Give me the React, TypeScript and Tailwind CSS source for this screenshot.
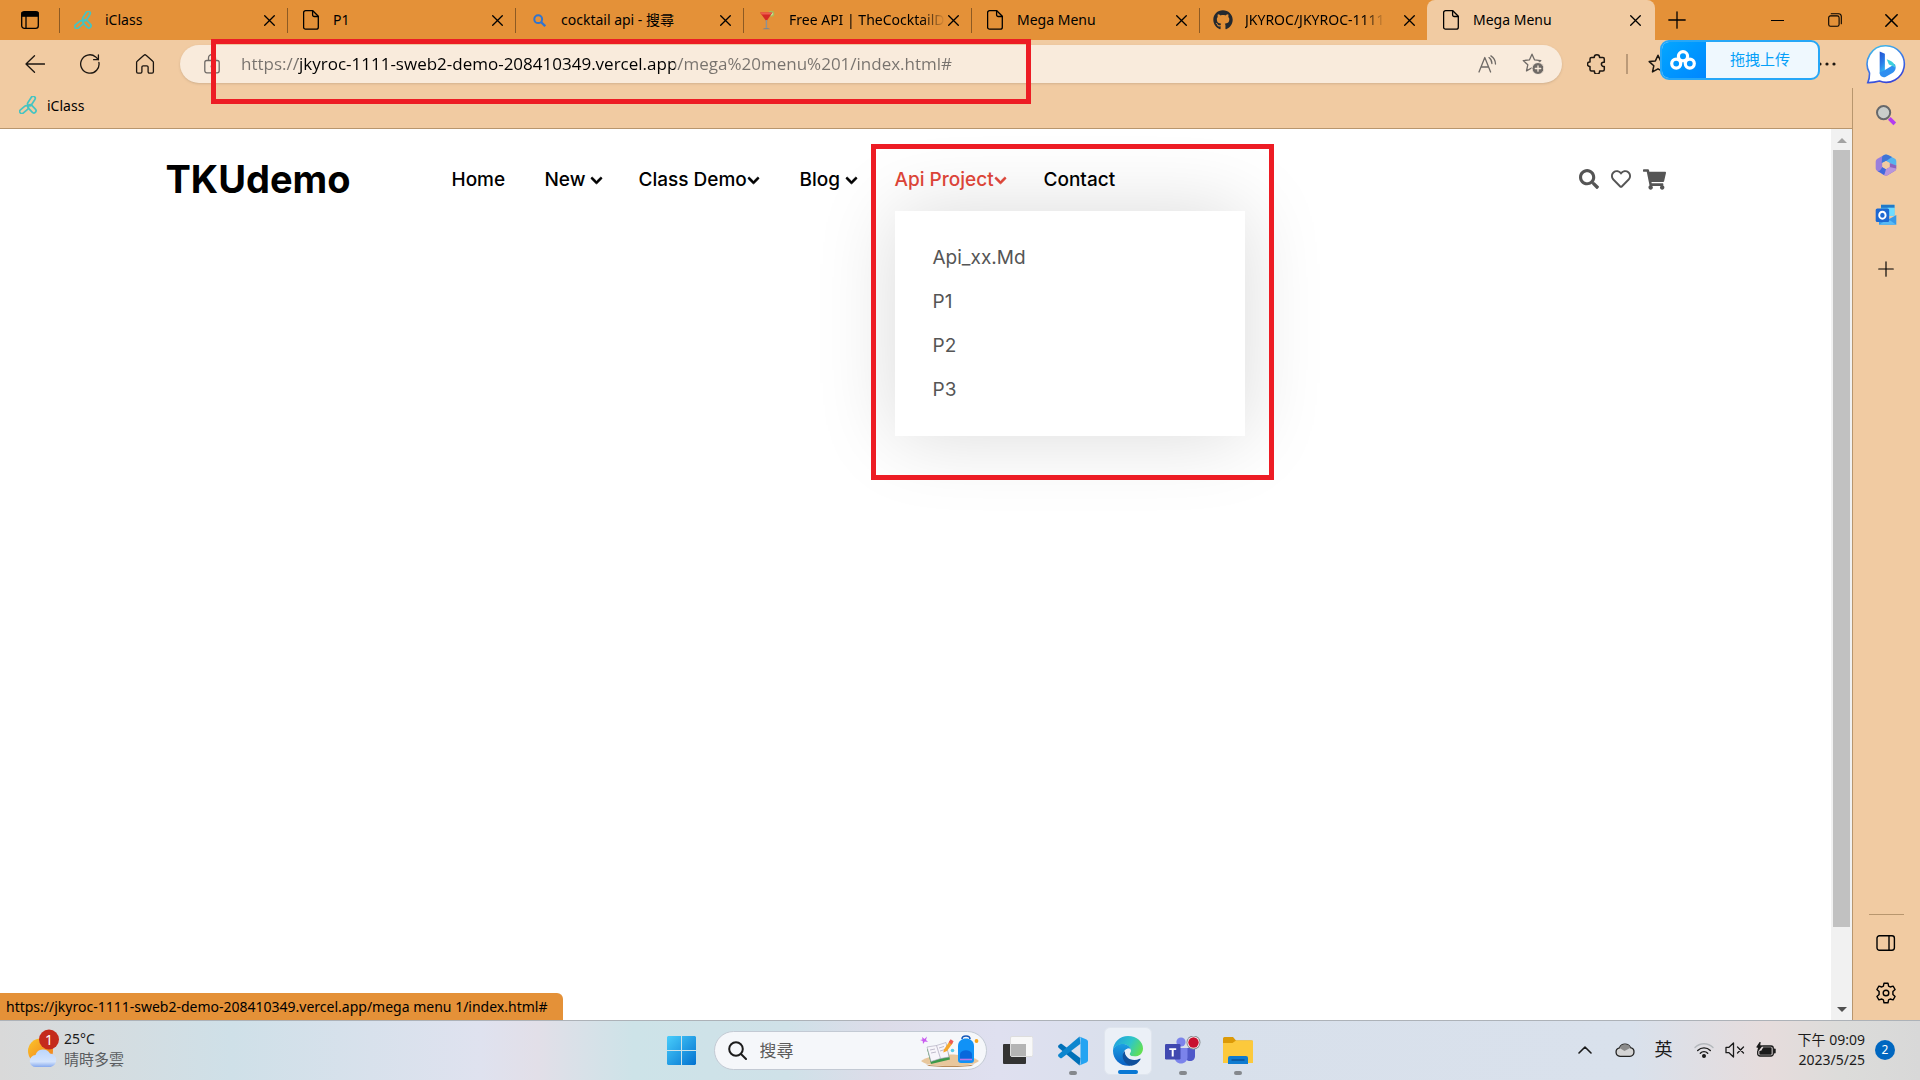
import React from "react";
import {
  FaSearch,
  FaRegHeart,
  FaShoppingCart,
  FaChevronDown,
  FaGithub,
} from "react-icons/fa";

type IconProps = { className?: string };

const stroke = {
  fill: "none",
  stroke: "currentColor",
  strokeLinecap: "round" as const,
  strokeLinejoin: "round" as const,
};

const CloseIcon = ({ className = "size-[11px]" }: IconProps) => (
  <svg viewBox="0 0 11 11" className={className} {...stroke} strokeWidth="1.3">
    <path d="M.7.7l9.6 9.6M10.3.7L.7 10.3" />
  </svg>
);

const PlusIcon = ({ className = "size-[18px]" }: IconProps) => (
  <svg viewBox="0 0 18 18" className={className} {...stroke} strokeWidth="1.3">
    <path d="M9 .8v16.4M.8 9h16.4" />
  </svg>
);

const PageIcon = () => (
  <svg viewBox="0 0 16 20" className="h-5 w-4" {...stroke} strokeWidth="1.3">
    <path d="M2.6.7h7.2l5.5 5.6v10.9a2 2 0 01-2 2H2.6a2 2 0 01-2-2V2.700a2 2 0 012-2z" />
    <path d="M9.600.9v4a1.600 1.600 0 001.600 1.600h4" />
  </svg>
);

const IClassIcon = () => (
  <svg viewBox="0 0 18 18" className="size-[18px]" fill="none" stroke="#45c4c2" strokeWidth="1.7">
    <rect x="10.300" y="-.3" width="4.200" height="10.500" rx="2.100" transform="rotate(33 12.400 5)" />
    <rect x="2.900" y="8.600" width="4.200" height="10" rx="2.100" transform="rotate(50 5 13.600)" />
    <rect x="10.800" y="8" width="4.400" height="9.600" rx="2.200" transform="rotate(-43 13 12.800)" />
  </svg>
);

const BlueSearchIcon = () => (
  <svg viewBox="0 0 13 13" className="size-[13px]" fill="none" stroke="#2f74d0">
    <circle cx="5.200" cy="5.200" r="3.900" strokeWidth="2" />
    <path d="M8.200 8.200l4 4" strokeWidth="2.300" />
  </svg>
);

const CocktailIcon = () => (
  <svg viewBox="0 0 16 20" className="h-5 w-4">
    <circle cx="12.300" cy="3.800" r="3" fill="#a9bd5a" />
    <circle cx="12.300" cy="3.800" r="1.600" fill="#d9dc9a" />
    <path d="M1 2.400h12.400L8 10.600h-1.200z" fill="#d42a25" />
    <path d="M1 2.400l12.400.2-2 1.800H2.800z" fill="#ee5c4c" />
    <path d="M6.700 10h1.400v8H6.700z" fill="#8d9296" />
    <path d="M3.600 19.200c1-1.700 6.600-1.700 7.600 0z" fill="#7f878c" />
  </svg>
);

type Tab = { title: string; icon: React.ReactNode; active?: boolean; fade?: boolean };

const tabs: Tab[] = [
  { title: "iClass", icon: <IClassIcon /> },
  { title: "P1", icon: <PageIcon /> },
  { title: "cocktail api - 搜尋", icon: <BlueSearchIcon /> },
  { title: "Free API | TheCocktailD", icon: <CocktailIcon />, fade: true },
  { title: "Mega Menu", icon: <PageIcon /> },
  {
    title: "JKYROC/JKYROC-1111",
    icon: <FaGithub className="size-5 text-[#24292f]" />,
    fade: true,
  },
  { title: "Mega Menu", icon: <PageIcon />, active: true },
];

function TabStrip() {
  return (
    <header className="flex h-10 items-stretch bg-[#e49138] text-black">
      <button aria-label="Tab actions" className="flex w-[59px] items-center justify-center">
        <svg viewBox="0 0 18 18" className="size-[18px]" {...stroke} strokeWidth="1.300">
          <rect x=".7" y=".7" width="16.600" height="16.600" rx="2.600" />
          <path d="M1 1.500h16v3.700H1z" fill="currentColor" />
          <path d="M5 5v12" />
        </svg>
      </button>
      {tabs.map((tab, i) => (
        <div
          key={i}
          className={
            tab.active
              ? "relative flex w-[228px] items-center rounded-t-lg bg-[#f1cba2] pr-[14px] pl-[14px]"
              : "relative flex w-[228px] items-center pr-3 pl-[14px]"
          }
        >
          {!tab.active && <span className="absolute top-2 left-0 h-[25px] w-px bg-[#8d5a23]" />}
          <button className="flex min-w-0 grow items-center gap-3">
            <span className="flex w-5 shrink-0 justify-center">{tab.icon}</span>
            <span
              className={
                tab.fade
                  ? "mask-r-from-[85%] mask-r-to-[100%] pb-0.5 text-left text-[14px] whitespace-nowrap"
                  : "pb-0.5 text-left text-[14px] whitespace-nowrap"
              }
            >
              {tab.title}
            </span>
          </button>
          <button aria-label="Close tab" className="shrink-0">
            <CloseIcon />
          </button>
        </div>
      ))}
      <button aria-label="New tab" className="flex w-11 items-center justify-center">
        <PlusIcon />
      </button>
      <div className="ml-auto flex">
        <button aria-label="Minimize" className="flex w-[57px] items-center justify-center">
          <span className="h-px w-[13px] bg-black" />
        </button>
        <button aria-label="Restore" className="flex w-[57px] items-center justify-center">
          <svg viewBox="0 0 14 14" className="size-[14px]" {...stroke} strokeWidth="1.100">
            <rect x=".7" y="2.900" width="10.400" height="10.400" rx="1.800" />
            <path d="M3.200.7h7.300a2.800 2.800 0 012.800 2.800v7.300" />
          </svg>
        </button>
        <button aria-label="Close window" className="flex w-[57px] items-center justify-center">
          <CloseIcon className="size-[13px]" />
        </button>
      </div>
    </header>
  );
}

const starPath =
  "M10 1.200l2.600 5.700 6.200.7-4.600 4.200 1.300 6.100L10 14.800l-5.500 3.100 1.300-6.100L1.200 7.600l6.200-.7z";

function Toolbar() {
  return (
    <div className="flex h-12 items-center text-[#1c1610]">
      <div className="flex w-[180px] shrink-0 items-center gap-[35px] pl-[25px]">
        <button aria-label="Back">
          <svg viewBox="0 0 20 20" className="size-5" {...stroke} strokeWidth="1.300">
            <path d="M9.500 1.700L1 10l8.500 8.300M1 10h18.500" />
          </svg>
        </button>
        <button aria-label="Refresh">
          <svg viewBox="0 0 20 20" className="size-5" {...stroke} strokeWidth="1.300">
            <path d="M18.900 8.300a9.200 9.200 0 11-3.200-5.400l2.600 2.600" />
            <path d="M18.400.9v4.800h-4.800" />
          </svg>
        </button>
        <button aria-label="Home">
          <svg viewBox="0 0 20 20" className="size-5" {...stroke} strokeWidth="1.300">
            <path d="M8.900 1.300a1.600 1.600 0 012.200 0l6.700 5.900c.4.300.6.800.6 1.300v9.300a1.300 1.300 0 01-1.300 1.300h-2.700a1.300 1.300 0 01-1.300-1.300v-4.700a1.300 1.300 0 00-1.300-1.300H8.200a1.300 1.300 0 00-1.300 1.300v4.700a1.300 1.300 0 01-1.300 1.300H2.900a1.300 1.300 0 01-1.300-1.300V8.500c0-.5.200-1 .6-1.300z" />
          </svg>
        </button>
      </div>
      <div className="flex h-[38px] grow items-center rounded-full bg-[#f9ebdc] pr-[18px] pl-6 text-[#6f6a66] shadow-sm">
        <svg viewBox="0 0 16 20" className="h-5 w-4 shrink-0" {...stroke} strokeWidth="1.300">
          <rect x=".8" y="6.500" width="14.400" height="12.300" rx="2" />
          <path d="M4.500 6.300V4a3.500 3.500 0 017 0v2.300" />
          <circle cx="8" cy="12.500" r=".8" fill="currentColor" />
        </svg>
        <input
          aria-label="Address"
          defaultValue="https://jkyroc-1111-sweb2-demo-208410349.vercel.app/mega%20menu%201/index.html#"
          className="ml-[21px] min-w-0 grow bg-[linear-gradient(to_right,#77726d_57px,#000_57px,#000_434px,#77726d_434px)] bg-clip-text font-['Open_Sans',sans-serif] text-[17px] text-transparent outline-none"
        />
        <button aria-label="Read aloud">
          <svg viewBox="0 0 20 18" className="h-[18px] w-5" {...stroke} strokeWidth="1.300">
            <path d="M1 17L6.800 2.500 12.600 17M3 12h7.600M11 2.600c2 1.500 2.900 3.500 2.900 6M12.900.9c3 2 4.600 5 4.600 8.200" />
          </svg>
        </button>
        <button aria-label="Add to favorites" className="ml-6">
          <svg viewBox="0 0 22 22" className="size-[22px]" {...stroke} strokeWidth="1.300">
            <path d={starPath} />
            <circle cx="16" cy="15.500" r="6" fill="#6f6a66" stroke="#f9ebdc" strokeWidth="1" />
            <path d="M16 12.800v5.400M13.300 15.500h5.400" stroke="#f9ebdc" />
          </svg>
        </button>
      </div>
      <div className="relative flex w-[290px] shrink-0 items-center pl-[25px]">
        <button aria-label="Extensions">
          <svg viewBox="0 0 20 20" className="size-5" {...stroke} strokeWidth="1.500">
            <path d="M7.200 3.500a2.700 2.700 0 015.400 0h3.200a1.500 1.500 0 011.500 1.500v3.200h-.8a2.100 2.100 0 000 4.200h.8v3.200a1.500 1.500 0 01-1.500 1.500h-3.200v.3a2.500 2.500 0 01-5.200 0v-.3H4.500A1.500 1.500 0 013 15.600v-3.200h-.3a2.200 2.200 0 010-4.400H3V5a1.500 1.500 0 011.500-1.500z" />
          </svg>
        </button>
        <span className="ml-[19px] h-5 w-0.5 bg-[#bb9a78]" />
        <button aria-label="Favorites" className="ml-5">
          <svg viewBox="0 0 20 20" className="size-5" {...stroke} strokeWidth="1.500">
            <path d={starPath} />
          </svg>
        </button>
        <button aria-label="Settings and more" className="mr-4 ml-auto">
          <svg viewBox="0 0 18 4" className="h-1 w-[18px]" fill="currentColor">
            <circle cx="2" cy="2" r="1.600" />
            <circle cx="9" cy="2" r="1.600" />
            <circle cx="16" cy="2" r="1.600" />
          </svg>
        </button>
        <button className="absolute -top-[14px] left-[98px] flex h-10 w-40 overflow-hidden rounded-[9px] border-2 border-[#27a7f7] bg-[#eff8fe]">
          <span className="-m-0.5 flex h-10 w-[46px] shrink-0 items-center justify-center bg-linear-to-br from-[#06a8ff] to-[#0285ff]">
            <svg viewBox="0 0 26 20" className="h-5 w-[26px]" fill="none" stroke="#fff" strokeWidth="3.200">
              <circle cx="13" cy="6.300" r="4.600" />
              <circle cx="6.200" cy="13.600" r="4.500" />
              <circle cx="19.800" cy="13.600" r="4.500" />
            </svg>
          </span>
          <span className="grow self-center pr-0.5 pb-0.5 text-[15px] text-[#06a0f8]">拖拽上传</span>
        </button>
      </div>
    </div>
  );
}

type MenuItem = { label: string; arrow?: boolean; space?: boolean; open?: boolean; width: string };

const menu: MenuItem[] = [
  { label: "Home", width: "w-[93px]" },
  { label: "New", arrow: true, space: true, width: "w-[94px]" },
  { label: "Class Demo", arrow: true, width: "w-[161px]" },
  { label: "Blog", arrow: true, space: true, width: "w-[95px]" },
  { label: "Api Project", arrow: true, open: true, width: "w-[149px]" },
  { label: "Contact", width: "w-[93px]" },
];

function DemoPage() {
  return (
    <main className="min-w-0 grow bg-white px-5 pt-5 font-[Inter,sans-serif]">
      <div className="mx-auto flex max-w-[1500px] items-center">
        <a href="#" className="w-[286px] pb-0.5 text-[38px] leading-none font-bold text-black">
          TKUdemo
        </a>
        <nav>
          <ul className="flex">
            {menu.map((item) => (
              <li
                key={item.label}
                className={`relative flex h-[62px] items-center ${item.width}`}
              >
                <a
                  href="#"
                  className={
                    item.open
                      ? "relative z-10 flex items-center text-[19px] font-medium whitespace-nowrap text-[#db4437]"
                      : "relative z-10 flex items-center text-[19px] font-medium whitespace-nowrap text-black"
                  }
                >
                  {item.label}
                  {item.arrow && (
                    <FaChevronDown
                      className={
                        item.space
                          ? "ml-[5px] size-[13px] stroke-current stroke-[30px]"
                          : "size-[13px] stroke-current stroke-[30px]"
                      }
                    />
                  )}
                </a>
                {item.open && (
                  <ul className="absolute top-full left-0 w-[350px] bg-white px-[38px] pt-[25px] pb-6 text-[19px] text-[#555] shadow-[0_0_80px_rgba(0,0,0,0.15)]">
                    {["Api_xx.Md", "P1", "P2", "P3"].map((t) => (
                      <li key={t} className="flex h-11 items-center">
                        <a href="#">{t}</a>
                      </li>
                    ))}
                  </ul>
                )}
              </li>
            ))}
          </ul>
        </nav>
        <div className="ml-auto flex items-center gap-3 pb-0.5 text-[20px] text-[#555]">
          <button aria-label="Search">
            <FaSearch />
          </button>
          <button aria-label="Wishlist">
            <FaRegHeart />
          </button>
          <button aria-label="Cart">
            <FaShoppingCart className="size-[23px]" />
          </button>
        </div>
      </div>
    </main>
  );
}

function ScrollBar() {
  return (
    <div className="flex w-[21px] shrink-0 flex-col items-center bg-[#f1f1f1]">
      <svg viewBox="0 0 10 5" className="mt-[9px] mb-[7px] h-[5px] w-[10px]" fill="#a3a3a3">
        <path d="M5 0l5 5H0z" />
      </svg>
      <div className="h-[777px] w-[17px] bg-[#c1c1c1]" />
      <svg viewBox="0 0 10 5" className="mt-auto mb-2 h-[5px] w-[10px]" fill="#505050">
        <path d="M5 5l5-5H0z" />
      </svg>
    </div>
  );
}

function SideBar() {
  return (
    <aside className="flex w-[68px] shrink-0 flex-col">
      <div className="flex h-12 items-start justify-center pt-1">
        <button aria-label="Bing chat">
          <svg viewBox="0 0 40 40" className="size-10">
            <defs>
              <linearGradient id="bingRing" x1="0" y1="0" x2=".4" y2="1">
                <stop offset="0" stopColor="#3fc5ea" />
                <stop offset=".55" stopColor="#3d7be8" />
                <stop offset="1" stopColor="#3848d8" />
              </linearGradient>
              <linearGradient id="bingB" x1="0" y1="0" x2=".3" y2="1">
                <stop offset="0" stopColor="#2450d0" />
                <stop offset=".6" stopColor="#2b7de9" />
                <stop offset="1" stopColor="#35b4f2" />
              </linearGradient>
            </defs>
            <path d="M20 1.700a18.300 18.300 0 11-6.500 35.400c-3.500 1-7.500 1.600-11.700 1.500 1.500-3 1.800-6 1.700-9.700A18.300 18.300 0 0120 1.700z" fill="#fff" stroke="url(#bingRing)" strokeWidth="1.600" />
            <path d="M13.700 7.500l5.200 2.200v16.800l-5.200 3.400z" fill="url(#bingB)" />
            <path d="M13.700 28.500l5.200-2.500 10-6c1.500 4 .8 7-2.500 9l-7 3.900c-3.300 1-5.700-1-5.700-4.400z" fill="#2f8ff0" />
            <path d="M20.700 15.200c5.500 1.700 8.300 4 8.500 8.500-1-1.200-2.300-1.900-6.300-3.200z" fill="#3fd0dc" />
          </svg>
        </button>
      </div>
      <nav className="flex grow flex-col items-center border-l border-[#b8966e] pr-px pb-4">
        <button aria-label="Search" className="mt-4">
          <svg viewBox="0 0 22 22" className="size-[22px]" fill="none">
            <path d="M14.300 14.300l5.500 5.500" stroke="#b43cf0" strokeWidth="3.800" />
            <circle cx="8.600" cy="8.600" r="6.600" fill="#c9cdca" stroke="#66686b" strokeWidth="2" />
          </svg>
        </button>
        <button aria-label="Microsoft 365" className="mt-7">
          <svg viewBox="0 0 22 22" className="size-[22px]">
            <path d="M9 .9L2 5Q.7 6 .7 7.500v7Q.7 16 2 16.800l1.500.8L7.400 15V7z" fill="#9a7fdc" />
            <path d="M9 .9Q11 0 13 .9l7 3.800q1.300.8 1.300 2.600v5L14.600 9 11 7 7.400 9 6.800 6z" fill="#56b4ee" />
            <path d="M9 .9L7.200 2.600 6.700 9l4.800-2.300L17 3.100 13 .9Q11 0 9 .9z" fill="#3f74d6" />
            <path d="M21.300 11.500v2.900q0 1.600-1.300 2.400l-7 4.300q-2 1-4 0l-1.600-1 .2-3L14.600 13V9z" fill="#8a62c0" />
            <path d="M9 21.100l-7-4.300q1.300.7 2.900-.1L7.400 13l3.600 2.300 3.600-2.300 6.600 1.500q0 1.500-1.200 2.300l-7 4.300q-2 1-4 0z" fill="#b795dc" />
            <path d="M9 21.100l-7-4.300q1.400.6 2.900-.2L7.400 13l3.600 2.200-1.500 5z" fill="#4169dc" />
            <path d="M11 7l3.500 2v4L11 15.100 7.500 13V9z" fill="#f1cba2" />
          </svg>
        </button>
        <button aria-label="Outlook" className="mt-7">
          <svg viewBox="0 0 22 22" className="size-[22px]">
            <path d="M6 .8h13.500v11H6z" fill="#58c6f5" />
            <path d="M6 .8h13.500v3H6z" fill="#2179c8" />
            <path d="M12.500 3.800h7v8h-7z" fill="#6fdcff" />
            <path d="M4 20.800h17.300V11l-8 4.500L4 13z" fill="#3799ea" />
            <path d="M4 20.800h17.300L13 15z" fill="#58baf5" />
            <rect x=".7" y="4.500" width="13.500" height="13.500" rx="1.600" fill="#1c68d2" />
            <ellipse cx="7.400" cy="11.200" rx="3.200" ry="3.500" fill="none" stroke="#fff" strokeWidth="1.900" />
          </svg>
        </button>
        <button aria-label="Customize" className="mt-[35px]">
          <PlusIcon className="size-4" />
        </button>
        <span className="mt-auto h-px w-[35px] bg-[#b8966e]" />
        <button aria-label="Hide sidebar" className="mt-5">
          <svg viewBox="0 0 20 16" className="h-4 w-5" {...stroke} strokeWidth="1.400">
            <rect x="1" y=".8" width="17.400" height="14.400" rx="2.400" />
            <path d="M13 1v14" />
          </svg>
        </button>
        <button aria-label="Settings" className="mt-[31px]">
          <svg viewBox="0 0 22 22" className="size-[22px]" {...stroke} strokeWidth="1.400">
            <path d="M9 1.200h4l.6 2.900 1.600.9 2.900-.9 2 3.400-2.200 2.100v2.800l2.200 2.100-2 3.400-2.900-.9-1.600.9-.6 2.900H9l-.6-2.900-1.600-.9-2.900.9-2-3.400 2.200-2.100V9.600L1.900 7.500l2-3.400 2.900.9 1.600-.9z" />
            <circle cx="11" cy="11" r="2.800" />
          </svg>
        </button>
      </nav>
    </aside>
  );
}

const TaskViewIcon = () => (
  <svg viewBox="0 0 30 30" className="size-[30px]">
    <rect x="0" y="8" width="23" height="20" rx="1" fill="#333" />
    <rect x="7.500" y=".5" width="22.500" height="20" rx="1.500" fill="#f8f8f8" stroke="#ddd" />
    <path d="M8 8h15v12H8z" fill="#b4b4b4" />
  </svg>
);

const CodeIcon = () => (
  <svg viewBox="0 0 100 100" className="size-[30px]">
    <path d="M2 31c-2.500 2.300-2.500 5.500 0 7.800L72 98.500 75 74 13 27c-2-1.500-4-1.500-6 0z" fill="#0070b8" />
    <path d="M2 69c-2.500-2.300-2.500-5.500 0-7.800L72 1.500 75 26 13 73c-2 1.500-4 1.500-6 0z" fill="#0d86cf" />
    <path d="M71 1.500L95 12c3 1.500 5 4 5 7v62c0 3-2 5.500-5 7L71 98.500c2.700-1 4-3 4-6V7.500c0-3-1.300-5-4-6z" fill="#24a4f2" />
  </svg>
);

const EdgeIcon = () => (
  <svg viewBox="0 0 30 30" className="size-[30px]">
    <defs>
      <linearGradient id="edgeTop" x1="0" y1=".2" x2="1" y2=".6">
        <stop offset="0" stopColor="#1f9fe0" />
        <stop offset=".55" stopColor="#2fc6c8" />
        <stop offset="1" stopColor="#62e052" />
      </linearGradient>
      <linearGradient id="edgeLeft" x1="0" y1="0" x2="0" y2="1">
        <stop offset="0" stopColor="#1c9fe2" />
        <stop offset="1" stopColor="#0a5fc4" />
      </linearGradient>
    </defs>
    <path d="M0 14C.5 6 7 0 15 0c9 0 15 6 15 12.500 0 5-4 8-8.500 8-3.500 0-5-1.200-5-2.200 0-1 1.300-1.500 1.300-4 0-3-3.300-6-8-6C5.500 8.300 1.500 10.500 0 14z" fill="url(#edgeTop)" />
    <path d="M0 14c1.200-3.700 5-5.900 9.500-5.900 4.500 0 8.300 2.700 8.300 6.200-.8-1.200-2-1.800-3.500-1.500-3.500 1-4.800 4.700-3.300 9 1 3.200 3.500 6 6.500 7.900C8 31 0 24 0 15z" fill="url(#edgeLeft)" />
    <path d="M11.500 15c-3 3.700-2 8.500 1 11.700 1.800 2 4 3.200 6 3 3.700-.5 7-3 9-6.300.3-.7-.2-1-.8-.7-5.200 2.500-12 1-14-3.700-.5-1.500-.6-2.700-1.200-4z" fill="#10509c" />
    <path d="M17.800 14.300c0-2.500-3.300-2.300-4.800-.5-1 1.300-1.300 3.500 0 5.500 1.500 2 3.700 3.500 6 3.900 3 .3 5.500 0 8-1l-5.500-1.700c-3.500 0-5-1.200-5-2.200 0-1 1.300-1.500 1.300-4z" fill="#e9eff7" />
  </svg>
);

const TeamsIcon = () => (
  <svg viewBox="0 0 36 30" className="h-[30px] w-9">
    <path d="M22 12h8v8c0 3-2 5-5 5s-5-2-5-5z" fill="#5059c9" />
    <circle cx="16" cy="6" r="4.600" fill="#7b83eb" />
    <path d="M9.500 12h13v9c0 4-3 6.500-6.500 6.500S9.500 25 9.500 21z" fill="#7b83eb" />
    <rect x="0" y="8" width="15.500" height="15.500" rx="1.200" fill="#4048b0" />
    <path d="M4.200 12.200h7v1.800H8.700v6.400h-2V14H4.200z" fill="#fff" />
    <circle cx="28.500" cy="6.500" r="7" fill="#8a8d92" />
    <circle cx="28.500" cy="6.500" r="6" fill="#fff" />
    <circle cx="28.500" cy="6.500" r="5.200" fill="#c8102e" />
  </svg>
);

const FolderIcon = () => (
  <svg viewBox="0 0 30 27" className="h-[27px] w-[30px]">
    <path d="M0 1.500A1.500 1.500 0 011.500 0H10l3 3.500h15.500A1.500 1.500 0 0130 5v8H0z" fill="#dc9a08" />
    <path d="M0 6h9.500L13 3.500h17V26H0z" fill="#fcc93c" />
    <path d="M5 27v-6a2 2 0 012-2h16a2 2 0 012 2v6z" fill="#0f7bd0" />
    <path d="M8.500 23h13" stroke="#0a4f94" strokeWidth="1.400" />
  </svg>
);

const StudyArt = () => (
  <svg viewBox="0 0 60 32" className="h-8 w-[60px] shrink-0">
    <path d="M1 26c6-4 15-6.500 28-6.500S54 22 59 26c-4 4-16 5-29 5S5 30 1 26z" fill="#e8c79c" />
    <path d="M6 29.500c12 2 35 2 48 0l-3 1.500c-12 1.500-30 1.500-42 0z" fill="#b88a58" />
    <path d="M7 14l19-5 4 15.500L11 29z" fill="#3c9a4a" />
    <path d="M7 12l9.500-1.500L26 7.500 29 22l-8.500 1.500-9.500 3z" fill="#f7f5fa" stroke="#a8a4b8" strokeWidth=".6" />
    <path d="M16.500 10.500l4 13M10 15l5-1M11 18l5-1M19 13l5-1.500M20 16l5-1.500" stroke="#a8a4b8" strokeWidth=".7" />
    <path d="M24 14.500l6-9 3 2.200-6 8.300-3.700 1.500z" fill="#f6a72c" />
    <path d="M28.700 7.200l1.900-3 3 2-2 3.200z" fill="#ee5a55" />
    <path d="M42 4c0-4 8-4 8 0" fill="none" stroke="#1557b8" strokeWidth="1.600" />
    <path d="M38 11c0-10 16-10 16 0v14a3 3 0 01-3 3H41a3 3 0 01-3-3z" fill="#1192f6" />
    <path d="M40 19c1-5 11-5 12 0v6H40z" fill="#0868dc" />
    <path d="M40 24.500h12" stroke="#b978ec" strokeWidth="1.600" />
    <path d="M2 2l2.500 2L7 1.500 6 5l2 2-3.200-.4L3 9l-.3-3L0 5l2.500-.6z" fill="#c95cf0" />
    <circle cx="56.500" cy="6" r="1.900" fill="#f5a318" />
    <circle cx="32.500" cy="15.500" r="1.800" fill="#55cbe8" />
  </svg>
);

const apps = [
  { name: "Task view", icon: <TaskViewIcon />, dot: "" },
  { name: "Visual Studio Code", icon: <CodeIcon />, dot: "w-2 bg-[#85888d]" },
  { name: "Edge", icon: <EdgeIcon />, dot: "w-5 bg-[#0a78d4]", active: true },
  { name: "Teams", icon: <TeamsIcon />, dot: "w-2 bg-[#85888d]" },
  { name: "File Explorer", icon: <FolderIcon />, dot: "w-2 bg-[#85888d]" },
];

function TaskBar() {
  return (
    <footer className="grid h-[60px] shrink-0 grid-cols-[1fr_auto_1fr] items-center border-t border-[#adb2b8] bg-[linear-gradient(to_right,#d9d9d9_0%,#cfe0e8_12%,#dfe2ef_25%,#e2dfe8_28%,#cde3e8_33%,#cfe1e8_41%,#dddce9_46%,#dfe0f0_52%,#d8e0eb_60%,#d9e1ec_85%,#e6dcdc_92%,#dcdcda_96%,#d8d8d8_100%)] text-[14px] text-[#1b1b1b]">
      <button className="flex items-center gap-[5px] justify-self-start pb-1 pl-[27px] text-left">
        <svg viewBox="0 0 32 40" className="h-10 w-8">
          <defs>
            <linearGradient id="sun" x1="0" y1="0" x2="1" y2="1">
              <stop offset="0" stopColor="#fbc52c" />
              <stop offset="1" stopColor="#f07818" />
            </linearGradient>
            <linearGradient id="cloud" x1="0" y1="0" x2="0" y2="1">
              <stop offset="0" stopColor="#bcd6fb" />
              <stop offset=".7" stopColor="#d4e4fd" />
              <stop offset="1" stopColor="#86a9ee" />
            </linearGradient>
          </defs>
          <circle cx="13.500" cy="22" r="12.500" fill="url(#sun)" />
          <path d="M9 38a6 6 0 01-.5-12 8 8 0 0114.500-1.500A6.800 6.800 0 0123.500 38z" fill="url(#cloud)" />
          <circle cx="22" cy="10.500" r="10" fill="#c42b1c" />
          <text x="22" y="15.500" textAnchor="middle" fontSize="14" fill="#fff">
            1
          </text>
        </svg>
        <span className="flex flex-col leading-5">
          <span>25°C</span>
          <span className="text-[15px] text-[#5a5d60]">晴時多雲</span>
        </span>
      </button>

      <div className="flex items-center pl-2">
        <button aria-label="Start" className="mr-[18px]">
          <svg viewBox="0 0 29 29" className="size-[29px]">
            <defs>
              <linearGradient id="win" x1="0" y1="0" x2="1" y2="1">
                <stop offset="0" stopColor="#48cdfb" />
                <stop offset="1" stopColor="#0372d0" />
              </linearGradient>
            </defs>
            <path d="M1 0h13v14H0V1zM15 0h13l1 1v13H15zM0 15h14v14H1l-1-1zM15 15h14v13l-1 1H15z" fill="url(#win)" />
          </svg>
        </button>
        <label className="flex h-[39px] w-[273px] items-center rounded-full border border-[#c3cad4] bg-[#f5f7fa] pr-1.5 pl-[13px]">
          <svg viewBox="0 0 19 19" className="size-[19px] shrink-0" {...stroke} strokeWidth="2">
            <circle cx="8" cy="8" r="6.800" />
            <path d="M13 13l5 5" />
          </svg>
          <input
            aria-label="搜尋"
            placeholder="搜尋"
            className="ml-[13px] min-w-0 grow bg-transparent text-[17px] outline-none placeholder:text-[#5c5c5c]"
          />
          <StudyArt />
        </label>
        <div className="ml-[7px] flex gap-[7px]">
          {apps.map((app) => (
            <button
              key={app.name}
              aria-label={app.name}
              className={
                app.active
                  ? "relative flex size-12 items-center justify-center rounded-md border border-[#dfe5ee] bg-[#ebf0f7]"
                  : "relative flex size-12 items-center justify-center"
              }
            >
              {app.icon}
              {app.dot && (
                <span className={`absolute bottom-0 left-1/2 h-1 -translate-x-1/2 rounded-full ${app.dot}`} />
              )}
            </button>
          ))}
        </div>
      </div>

      <div className="flex items-center justify-self-end pr-[25px] pb-0.5">
        <button aria-label="Show hidden icons">
          <svg viewBox="0 0 14 8" className="h-2 w-[14px]" {...stroke} strokeWidth="1.600">
            <path d="M1 7l6-6 6 6" />
          </svg>
        </button>
        <button aria-label="OneDrive" className="ml-[23px]">
          <svg viewBox="0 0 20 14" className="h-[14px] w-5">
            <path d="M5 13.300a4.300 4.300 0 01-.5-8.500 6 6 0 0111-.2 4.400 4.400 0 01-.7 8.700z" fill="#d4d4d4" stroke="#222" strokeWidth="1.300" />
            <path d="M4.500 5a6 6 0 0111-.3L9.500 8z" fill="#8b8b8b" />
          </svg>
        </button>
        <button className="ml-5 text-[18px]">英</button>
        <button aria-label="Network and sound" className="ml-[21px] flex items-center gap-[11px]">
          <svg viewBox="0 0 20 16" className="h-4 w-5" {...stroke} strokeWidth="1.400">
            <path d="M1 5.500a12.700 12.700 0 0118 0" stroke="#b4b8bc" />
            <path d="M3.700 8.400a9 9 0 0112.600 0M6.300 11.200a5.200 5.200 0 017.400 0" />
            <circle cx="10" cy="14" r="1.300" fill="currentColor" />
          </svg>
          <svg viewBox="0 0 20 16" className="h-4 w-5" {...stroke} strokeWidth="1.300">
            <path d="M1 5.300h3L8.500 1v14L4 10.700H1zM12.500 5l6 6M18.500 5l-6 6" />
          </svg>
          <svg viewBox="0 0 20 16" className="h-4 w-5" {...stroke} strokeWidth="1.300">
            <path d="M6.500 4H15a2.300 2.300 0 012.300 2.300v5.400A2.300 2.300 0 0115 14H4a2.300 2.300 0 01-2.300-2.300V9.500" />
            <path d="M18.700 7.500v3" strokeWidth="2" />
            <path d="M7.500 6h7.500v6H4V9.500h1.500z" fill="currentColor" />
            <path d="M4 .5L1 5h2l-1 3.500L5.500 4h-2z" fill="currentColor" />
          </svg>
        </button>
        <button className="ml-[22px] flex items-center gap-[10px]">
          <span className="flex flex-col text-right leading-5">
            <span>下午 09:09</span>
            <span>2023/5/25</span>
          </span>
          <span className="flex size-5 items-center justify-center rounded-full bg-[#0067c0] text-[12px] text-white">
            2
          </span>
        </button>
      </div>
    </footer>
  );
}

export default function App() {
  return (
    <div className="relative flex h-screen flex-col overflow-hidden bg-[#f1cba2] font-['Noto_Sans','Noto_Sans_CJK_TC',sans-serif]">
      <TabStrip />
      <div className="flex min-h-0 grow">
        <div className="flex min-w-0 grow flex-col">
          <Toolbar />
          <div className="flex h-[41px] items-center border-b border-[#b8966e] pb-1.5 pl-[19px]">
            <a href="#" className="flex items-center gap-[10px] text-[14px] text-black">
              <IClassIcon />
              iClass
            </a>
          </div>
          <div className="relative flex min-h-0 grow">
            <DemoPage />
            <ScrollBar />
            <div className="absolute bottom-0 left-0 flex h-[27px] w-[563px] items-center overflow-hidden rounded-tr-md bg-[#e49138] pl-1.5 text-[14px] whitespace-nowrap text-black">
              https://jkyroc-1111-sweb2-demo-208410349.vercel.app/mega menu 1/index.html#
            </div>
          </div>
        </div>
        <SideBar />
      </div>
      <TaskBar />
      <div className="pointer-events-none absolute top-[39px] left-[211px] z-20 h-[65px] w-[820px] border-5 border-[#ed1c24]" />
      <div className="pointer-events-none absolute top-36 left-[871px] z-20 h-[336px] w-[403px] border-5 border-[#ed1c24]" />
    </div>
  );
}
